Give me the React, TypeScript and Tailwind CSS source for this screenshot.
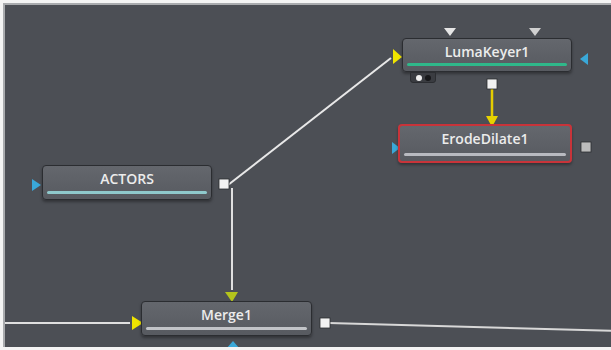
import React from 'react';

type NodeProps = {
  label: string;
  x: number;
  y: number;
  w: number;
  h: number;
  bar: string;
  selected?: boolean;
};

const Node = ({ label, x, y, w, h, bar, selected }: NodeProps) => {
  return (
    <div
      className={`absolute rounded-[4px] ${selected ? 'border-2 border-[#c8343a]' : 'border border-[#2b2d31]'} bg-[linear-gradient(#64676d,#575a60)] shadow-[0_2px_3px_rgba(0,0,0,0.35)] flex flex-col items-center justify-between pt-[4px] pb-[5px] px-[4px]`}
      style={{ left: x, top: y, width: w, height: h }}
    >
      <span className="text-[14px] leading-[17px] font-semibold text-[#ececec] [font-family:'Open_Sans',sans-serif]">
        {label}
      </span>
      <div className="w-full h-[3px] rounded-full" style={{ background: bar }} />
    </div>
  );
};

const Canvas = () => {
  return (
    <div className="absolute left-[3px] top-[3px] right-0 bottom-[3px] bg-[#4c4f55] border-l-2 border-t-2 border-[#a9abae] overflow-hidden">
      {/* wires */}
      <svg className="absolute left-[-5px] top-[-5px]" width="620" height="360">
        <line x1="228" y1="185" x2="391" y2="58" stroke="#e8e8e8" strokeWidth="2" />
        <line x1="232" y1="188" x2="232" y2="290" stroke="#e0e0e0" strokeWidth="2" />
        <line x1="5" y1="323" x2="130" y2="323" stroke="#e0e0e0" strokeWidth="2" />
        <line x1="329" y1="323" x2="620" y2="331" stroke="#d8d8d8" strokeWidth="2" />
        <line x1="492" y1="88" x2="492" y2="117" stroke="#e4cc00" strokeWidth="2.5" />
        {/* yellow inputs */}
        <polygon points="393,49 402,57 393,64" fill="#f0e400" />
        <polygon points="132,316 143,323 132,330" fill="#f0e400" />
        <polygon points="486,116 498,116 492,127" fill="#e6d200" />
        <polygon points="225,292 238,292 232,302" fill="#b4c41c" />
        {/* blue inputs */}
        <polygon points="32,179 41,185 32,191" fill="#3aa8d8" />
        <polygon points="392,142 400,148 392,154" fill="#3aa8d8" />
        <polygon points="588,53 580,59 588,65" fill="#3aa8d8" />
        <polygon points="226,349 233,341 240,349" fill="#3aa8d8" />
        {/* masks */}
        <polygon points="444,28 456,28 450,36" fill="#e6e6e6" />
        <polygon points="529,28 541,28 535,36" fill="#d0d0d0" />
        {/* outputs */}
        <rect x="219" y="179" width="10" height="10" fill="#f2f2f2" stroke="#2b2d31" strokeWidth="0.8" />
        <rect x="487" y="79" width="10" height="10" fill="#f2f2f2" stroke="#2b2d31" strokeWidth="0.8" />
        <rect x="581" y="142" width="10" height="10" fill="#bcbcbc" stroke="#2b2d31" strokeWidth="0.8" />
        <rect x="320" y="318" width="10" height="10" fill="#f2f2f2" stroke="#2b2d31" strokeWidth="0.8" />
      </svg>
      {/* nodes */}
      <Node label="LumaKeyer1" x={397} y={33} w={170} h={34} bar="#2fb88a" />
      <div className="absolute left-[405px] top-[67px] w-[26px] h-[11px] rounded-b-[3px] bg-[#3a3c41] border border-[#2b2d31] flex items-center justify-center gap-[3px]">
        <div className="w-[6px] h-[6px] rounded-full bg-[#f0f0f0]" />
        <div className="w-[6px] h-[6px] rounded-full bg-[#17181a]" />
      </div>
      <Node label="ErodeDilate1" x={393} y={119} w={174} h={39} bar="#b8bac0" selected />
      <Node label="ACTORS" x={37} y={160} w={170} h={35} bar="#8fc9cc" />
      <Node label="Merge1" x={136} y={296} w={171} h={35} bar="#c2c4c8" />
    </div>
  );
};

export default function App() {
  return (
    <div className="relative w-[611px] h-[350px] bg-[#f4f4f4] overflow-hidden">
      <Canvas />
    </div>
  );
}
